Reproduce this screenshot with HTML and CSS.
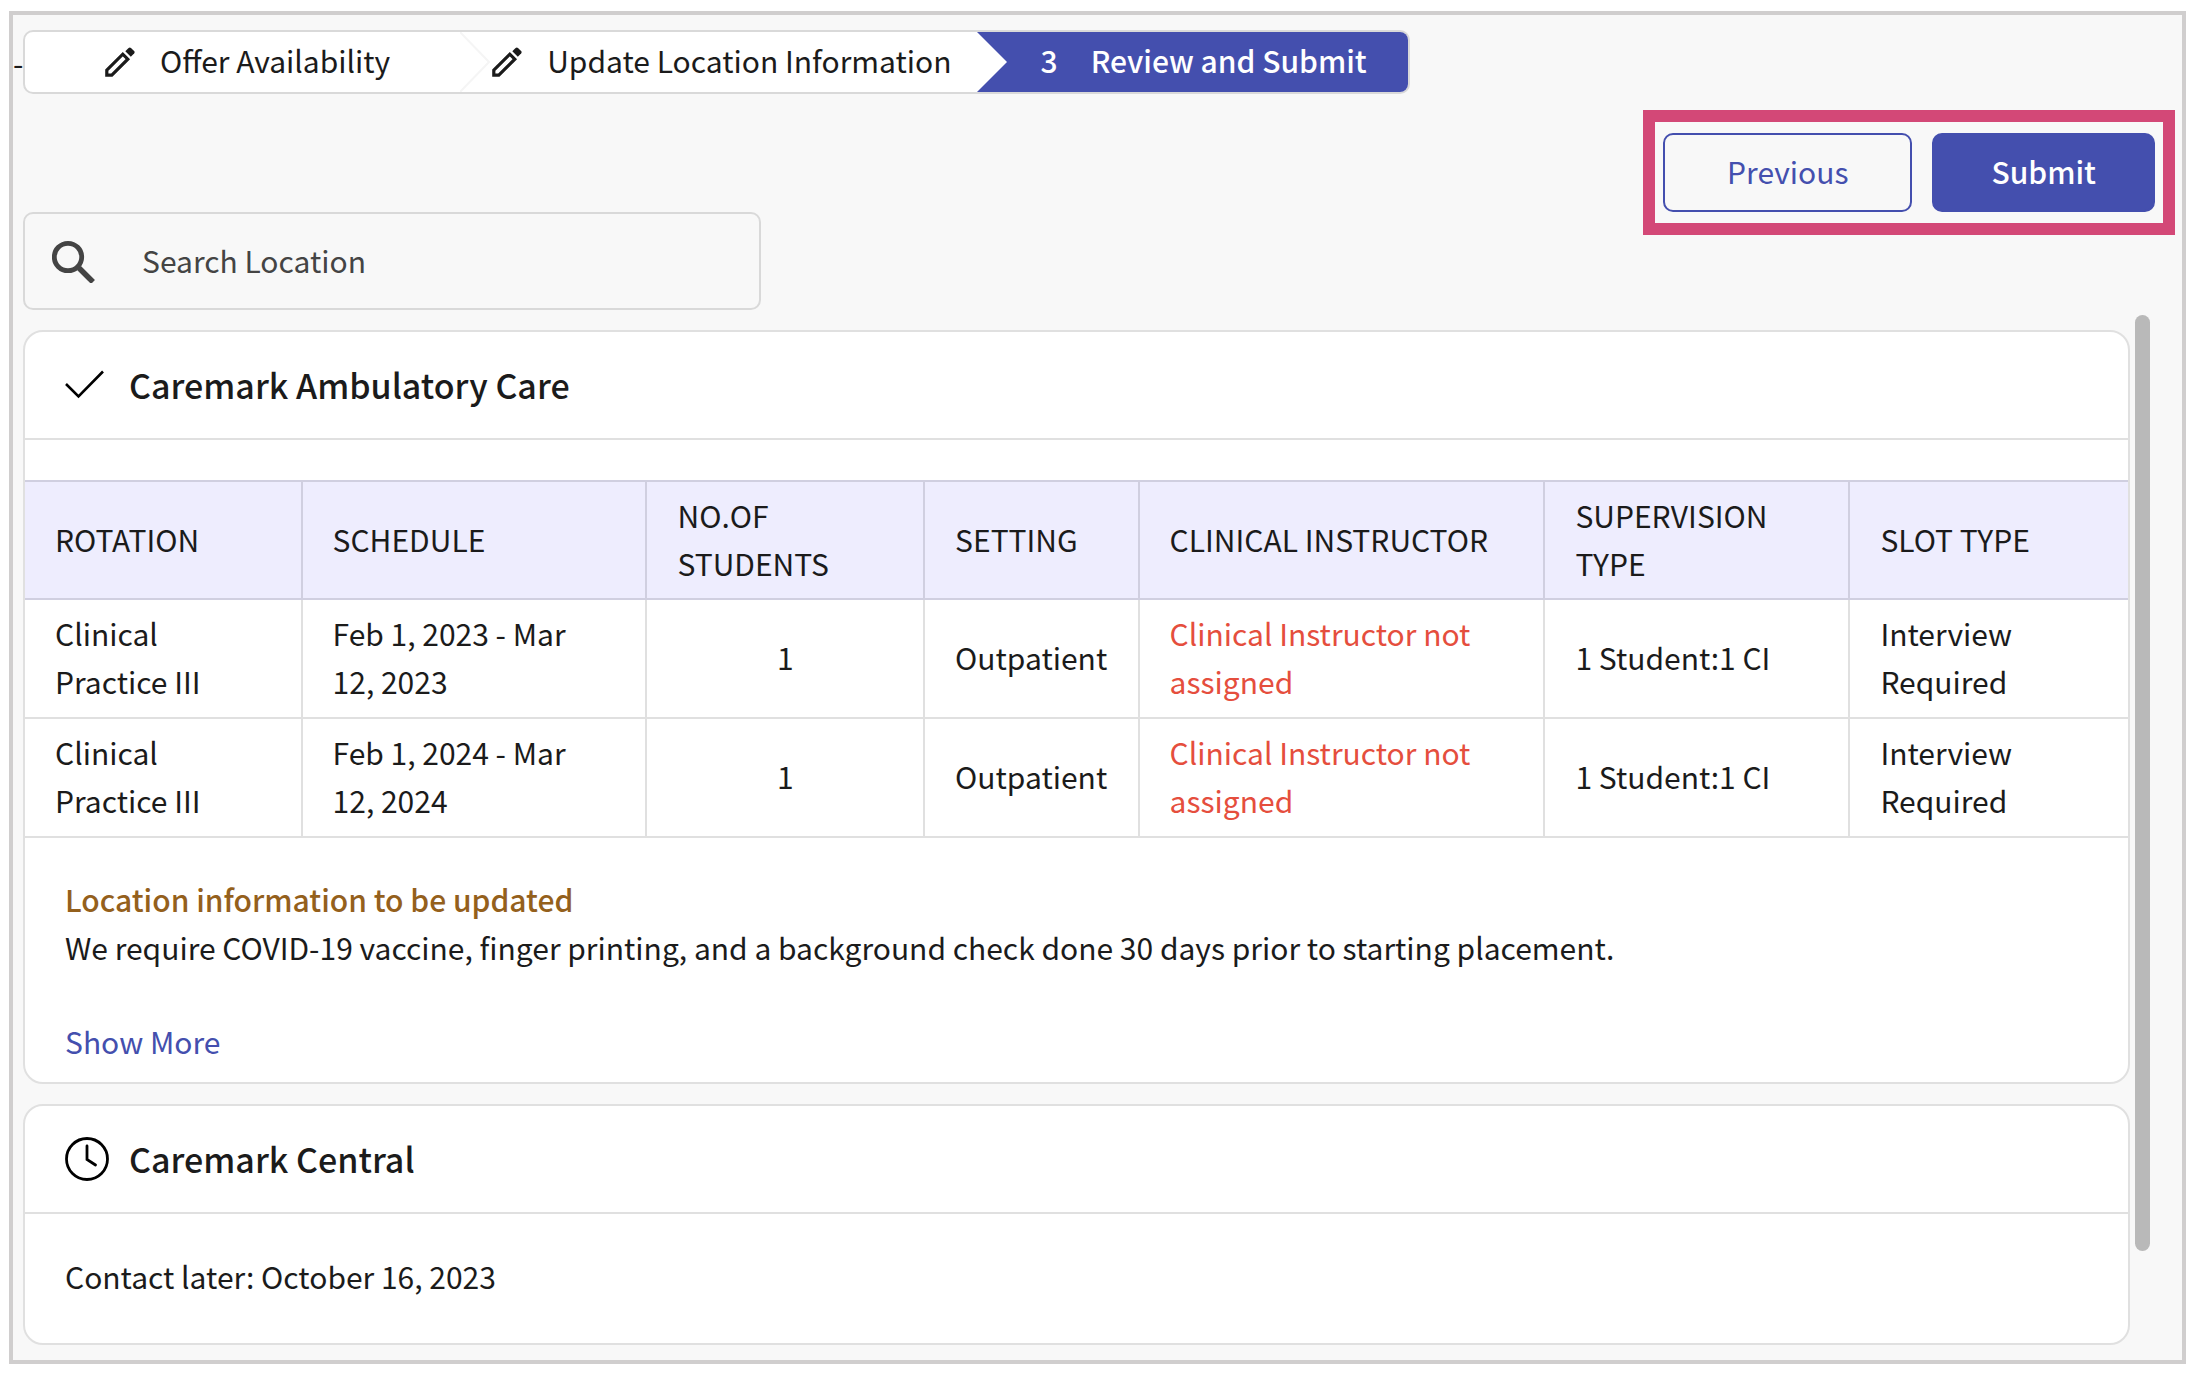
FILE: index.html
```html
<!DOCTYPE html>
<html lang="en">
<head>
<meta charset="utf-8">
<title>Review and Submit</title>
<link rel="stylesheet" href="styles.css">
</head>
<body>
<main class="frame">
  <div class="stepper-row">
    <span class="stub">-</span>
    <nav class="stepper" aria-label="Progress">
      <a class="step step-offer" href="#offer">
        <svg class="pencil" viewBox="0 0 30 30" aria-hidden="true"><path fill="none" stroke="#1b1b1b" stroke-width="3.200" stroke-linejoin="miter" d="M1.800 28.200v-5L17.800 7.200l5 5L6.800 28.200z"/><path fill="#1b1b1b" d="M20.300 4.200l3.300-3.300q1.200-1 2.400 0l3.100 3.100q1 1.200 0 2.400l-3.300 3.300z"/></svg>
        <span>Offer Availability</span>
      </a>
      <svg class="chevron" viewBox="0 0 30 60" preserveAspectRatio="none" aria-hidden="true"><path d="M0 0L29 30L0 60" fill="none" stroke="#f5f5f5" stroke-width="2"/></svg>
      <a class="step step-update" href="#location">
        <svg class="pencil" viewBox="0 0 30 30" aria-hidden="true"><path fill="none" stroke="#1b1b1b" stroke-width="3.200" stroke-linejoin="miter" d="M1.800 28.200v-5L17.800 7.200l5 5L6.800 28.200z"/><path fill="#1b1b1b" d="M20.300 4.200l3.300-3.300q1.200-1 2.400 0l3.100 3.100q1 1.200 0 2.400l-3.300 3.300z"/></svg>
        <span>Update Location Information</span>
      </a>
      <a class="step step-current" href="#review" aria-current="step">
        <svg class="chevron" viewBox="0 0 30 60" preserveAspectRatio="none" aria-hidden="true"><path d="M0 0L30 30L0 60z" fill="#fff"/></svg>
        <span class="step-number">3</span>
        <span>Review and Submit</span>
      </a>
    </nav>
  </div>

  <div class="actions">
    <div class="action-group">
      <button class="btn btn-outline" type="button">Previous</button>
      <button class="btn btn-solid" type="button">Submit</button>
    </div>
  </div>

  <label class="search">
    <svg class="search-icon" viewBox="0 0 44 44" aria-hidden="true"><circle cx="16" cy="18" r="13.700" fill="none" stroke="#444" stroke-width="4.800"/><path d="M27 29L41 43" stroke="#444" stroke-width="5.500"/></svg>
    <input class="search-input" type="text" placeholder="Search Location" aria-label="Search Location">
  </label>

  <div class="results">
    <div class="cards">
      <section class="card">
        <header class="card-head">
          <svg class="card-icon" viewBox="0 0 44 44" aria-hidden="true"><path d="M1 21L13.500 33.500L38 8.500" fill="none" stroke="#000" stroke-width="2.600"/></svg>
          <h2 class="card-title">Caremark Ambulatory Care</h2>
        </header>
        <table class="slots">
          <colgroup>
            <col class="col-rotation"><col class="col-schedule"><col class="col-students"><col class="col-setting"><col class="col-instructor"><col class="col-supervision"><col class="col-slot">
          </colgroup>
          <thead>
            <tr><th>ROTATION</th><th>SCHEDULE</th><th>NO.OF STUDENTS</th><th>SETTING</th><th>CLINICAL INSTRUCTOR</th><th>SUPERVISION TYPE</th><th>SLOT TYPE</th></tr>
          </thead>
          <tbody>
            <tr><td>Clinical Practice III</td><td class="dates">Feb 1, 2023 - Mar 12, 2023</td><td class="count">1</td><td>Outpatient</td><td class="missing">Clinical Instructor not assigned</td><td>1 Student:1 CI</td><td>Interview Required</td></tr>
            <tr><td>Clinical Practice III</td><td class="dates">Feb 1, 2024 - Mar 12, 2024</td><td class="count">1</td><td>Outpatient</td><td class="missing">Clinical Instructor not assigned</td><td>1 Student:1 CI</td><td>Interview Required</td></tr>
          </tbody>
        </table>
        <div class="location-info">
          <h3 class="info-title">Location information to be updated</h3>
          <p class="info-text">We require COVID-19 vaccine, finger printing, and a background check done 30 days prior to starting placement.</p>
          <a class="show-more" href="#more">Show More</a>
        </div>
      </section>

      <section class="card">
        <header class="card-head">
          <svg class="card-icon" viewBox="0 0 44 44" aria-hidden="true"><circle cx="22" cy="22" r="20.500" fill="none" stroke="#000" stroke-width="2.800"/><path d="M22 9v13.500l8.500 5.500" fill="none" stroke="#000" stroke-width="2.800" stroke-linecap="round"/></svg>
          <h2 class="card-title">Caremark Central</h2>
        </header>
        <p class="contact">Contact later: October 16, 2023</p>
      </section>
    </div>
    <div class="track"><div class="thumb"></div></div>
  </div>
</main>
</body>
</html>
```
FILE: styles.css
```css
* {
  box-sizing: border-box;
}

body {
  margin: 0;
  padding: 11px 12px 10px 9px;
  background: #fff;
  color: #1b1b1b;
  font: 400 30px/48px "Noto Sans CJK SC", "Noto Sans", sans-serif;
}

h2, h3, p {
  margin: 0;
}

a {
  color: inherit;
  text-decoration: none;
}

.frame {
  border: 4px solid #d0cece;
  background: #f8f8f8;
  padding: 15px 0 0;
}

/* Progress steps */
.stepper-row {
  display: flex;
  align-items: center;
}

.stub {
  width: 10px;
  overflow: hidden;
}

.stepper {
  display: flex;
  height: 64px;
  border: 2px solid #d9d9d9;
  border-radius: 10px;
  background: #fff;
  overflow: hidden;
}

.step {
  display: flex;
  align-items: center;
}

.step span {
  padding-bottom: 5px;
}

.step-offer {
  gap: 25px;
  padding: 0 70px 0 80px;
}

.step-update {
  gap: 25px;
  padding: 0 25px 0 2px;
}

.step-current {
  padding-right: 41px;
  background: #444fae;
  color: #fff;
  font-weight: 500;
}

.step-number {
  margin: 0 33px 0 34px;
}

.chevron {
  width: 30px;
  height: 60px;
}

.pencil {
  width: 30px;
  height: 30px;
}

/* Actions */
.actions {
  display: flex;
  justify-content: flex-end;
  padding: 39px 27px 0 0;
}

.action-group {
  position: relative;
  display: flex;
  gap: 20px;
}

.action-group::after {
  content: "";
  position: absolute;
  inset: -23px -20px;
  border: 12px solid #d34877;
  pointer-events: none;
}

.btn {
  height: 79px;
  border: 2px solid #444fae;
  border-radius: 10px;
  font: inherit;
}

.btn-outline {
  padding: 0 62px 3px;
  background: transparent;
  color: #444fae;
}

.btn-solid {
  padding: 0 57px 3px;
  background: #444fae;
  color: #fff;
  font-weight: 500;
}

/* Search */
.search {
  display: flex;
  align-items: center;
  gap: 46px;
  width: 738px;
  max-width: 100%;
  height: 98px;
  margin-left: 10px;
  padding: 0 27px;
  border: 2px solid #d9d9d9;
  border-radius: 10px;
}

.search-icon {
  flex: none;
  width: 44px;
  height: 44px;
}

.search-input {
  flex: 1;
  min-width: 0;
  padding: 0 0 3px;
  border: 0;
  outline: 0;
  background: transparent;
  color: #444;
  font: inherit;
}

.search-input::placeholder {
  color: #444;
  opacity: 1;
}

/* Results */
.results {
  display: flex;
  gap: 5px;
  padding: 5px 32px 0 10px;
}

.cards {
  flex: 1;
  display: grid;
  gap: 20px;
  padding: 15px 0;
}

.track {
  width: 15px;
}

.thumb {
  height: calc(90% - 5px);
  border-radius: 8px;
  background: #b9b9b9;
}

.card {
  border: 2px solid #e0e0e0;
  border-radius: 20px;
  background: #fff;
  overflow: hidden;
}

.card-head {
  display: flex;
  align-items: center;
  gap: 20px;
  height: 108px;
  padding: 0 40px;
  border-bottom: 2px solid #e0e0e0;
}

.card-icon {
  width: 44px;
  height: 44px;
}

.card-title {
  font-size: 34px;
  font-weight: 500;
}

.slots {
  width: 100%;
  margin-top: 40px;
  border-spacing: 0;
  table-layout: fixed;
}

.col-rotation,
.col-students,
.col-slot {
  width: 13.200%;
}

.col-schedule {
  width: 16.400%;
}

.col-setting {
  width: 10.200%;
}

.col-instructor {
  width: 19.300%;
}

.col-supervision {
  width: 14.500%;
}

.slots th,
.slots td {
  padding: 9px 24px 12px 30px;
  border-right: 2px solid #e0e0e0;
  border-bottom: 2px solid #e0e0e0;
  text-align: left;
  vertical-align: middle;
}

.slots th {
  border-top: 2px solid #d0cfe0;
  border-color: #d0cfe0;
  padding-bottom: 11px;
  background: #eeedfe;
  font-weight: 400;
}

.slots th:last-child,
.slots td:last-child {
  border-right: 0;
}

.slots .dates {
  padding-right: 48px;
}

.slots .count {
  padding-left: 24px;
  text-align: center;
}

.slots .missing {
  color: #e54e3d;
}

.location-info {
  padding: 37px 40px 17px;
}

.info-title {
  color: #94601c;
  font-size: 30px;
  font-weight: 500;
}

.show-more {
  display: inline-block;
  margin-top: 46px;
  color: #444fae;
}

.contact {
  padding: 38px 40px 43px;
}
```
